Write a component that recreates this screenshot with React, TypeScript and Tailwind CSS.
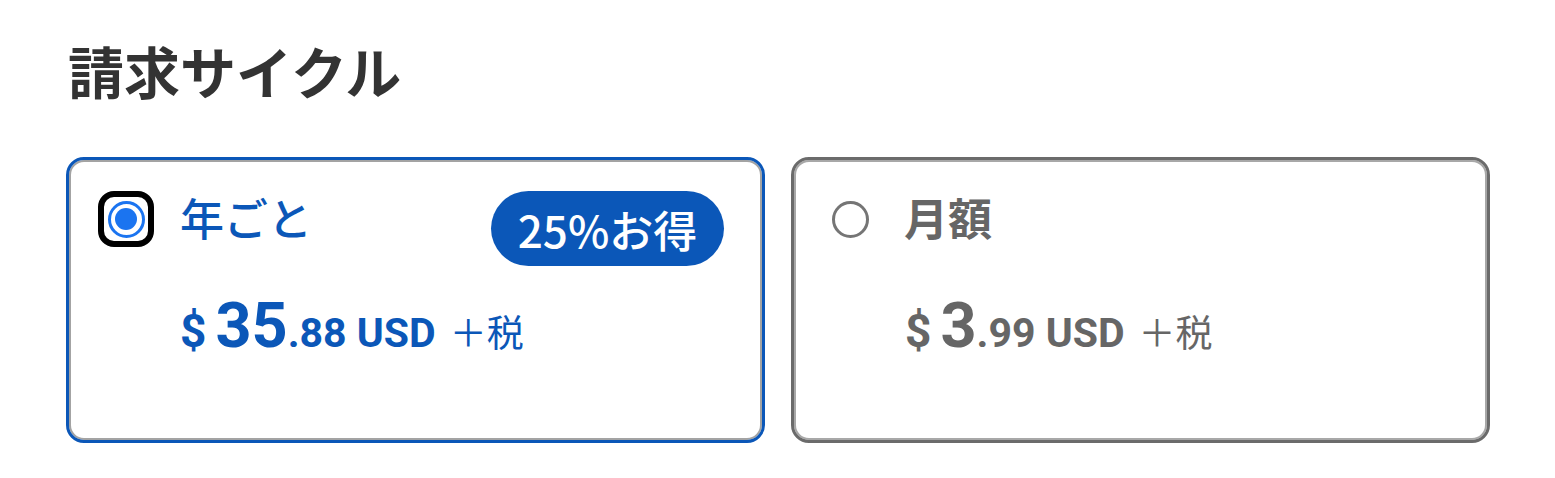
import React from "react";

const jp = '"Noto Sans CJK JP", "Noto Sans", sans-serif';
const latin = 'Roboto, "Noto Sans CJK JP", sans-serif';

function Price({ whole, cents }: { whole: string; cents: string }) {
  return (
    <div className="ml-[111px] mt-[44px] flex h-[70px] items-baseline">
      <span className="text-[46px] font-bold leading-[70px]" style={{ fontFamily: latin }}>$</span>
      <span className="ml-[9px] text-[63px] font-bold leading-[70px]" style={{ fontFamily: latin }}>{whole}</span>
      <span className="text-[41px] font-bold leading-[70px]" style={{ fontFamily: latin }}>{cents} USD</span>
      <span className="ml-[14px] text-[37px] leading-[70px]">＋税</span>
    </div>
  );
}

export default function App() {
  return (
    <div className="min-h-[478px] w-[1555px] bg-white pl-[66px] pt-[34px]" style={{ fontFamily: jp }}>
      <h1 className="pl-[2px] text-[56px] font-bold leading-[72px] text-[#333333]">請求サイクル</h1>
      <div className="mt-[51px] flex gap-[26px]">
        {/* Yearly - selected */}
        <div className="h-[286px] w-[699px] rounded-[18px] border-[3px] border-[#0b57b8] text-[#0b57b8] shadow-[inset_0_0_0_2px_#a3a3a3]">
          <div className="flex h-[56px] items-center pl-[29px] pr-[38px] mt-[31px]">
            <div className="flex h-[56px] w-[56px] shrink-0 items-center justify-center rounded-[16px] border-[6px] border-black">
              <div className="flex h-[37px] w-[37px] items-center justify-center rounded-full border-[3px] border-[#1b74f0]">
                <div className="h-[22px] w-[22px] rounded-full bg-[#1b74f0]" />
              </div>
            </div>
            <div className="ml-[26px] mt-[-4px] text-[44px] font-medium leading-[52px]">年ごと</div>
            <div className="ml-auto flex h-[75px] w-[233px] items-center justify-center self-start rounded-full bg-[#0b57b8] text-[44px] font-medium text-white">
              25%お得
            </div>
          </div>
          <Price whole="35" cents=".88" />
        </div>
        {/* Monthly */}
        <div className="h-[286px] w-[699px] rounded-[18px] border-[3px] border-[#6b6b6b] text-[#666666] shadow-[inset_0_0_0_2px_#a8a8a8]">
          <div className="mt-[31px] flex h-[56px] items-center pl-[38px]">
            <div className="h-[37px] w-[37px] shrink-0 rounded-full border-[3px] border-[#757575]" />
            <div className="ml-[35px] mt-[-4px] text-[44px] font-bold leading-[52px]">月額</div>
          </div>
          <Price whole="3" cents=".99" />
        </div>
      </div>
    </div>
  );
}
